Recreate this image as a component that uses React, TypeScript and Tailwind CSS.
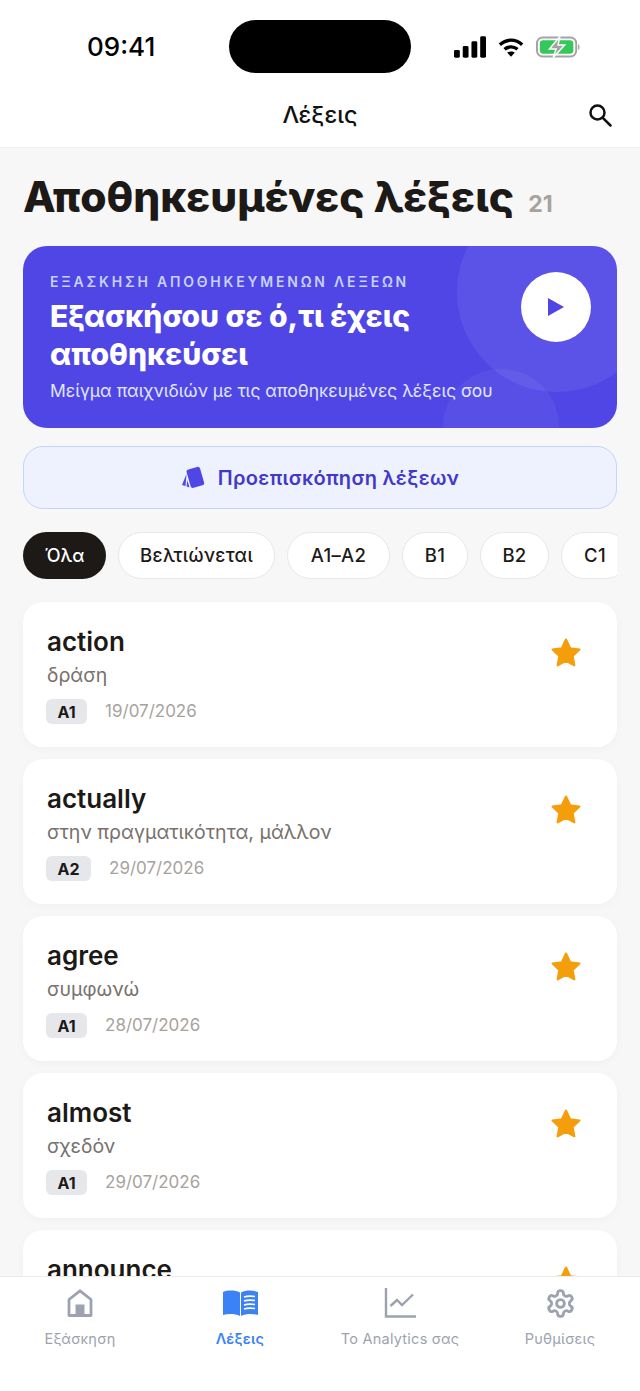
const filters = [
  { label: 'Βελτιώνεται', width: 'w-[157px]' },
  { label: 'A1–A2', width: 'w-[103px]' },
  { label: 'B1', width: 'w-[66px]' },
  { label: 'B2', width: 'w-[69px]' },
  { label: 'C1', width: 'w-[68px]' },
  { label: 'C2', width: 'w-[68px]' },
];

const words = [
  { word: 'action', meaning: 'δράση', level: 'A1', date: '19/07/2026' },
  { word: 'actually', meaning: 'στην πραγματικότητα, μάλλον', level: 'A2', date: '29/07/2026' },
  { word: 'agree', meaning: 'συμφωνώ', level: 'A1', date: '28/07/2026' },
  { word: 'almost', meaning: 'σχεδόν', level: 'A1', date: '29/07/2026' },
  { word: 'announce', meaning: 'ανακοινώνω', level: 'A2', date: '29/07/2026' },
];

function StatusIcons() {
  return (
    <div className="flex items-center gap-[12px]">
      <svg width="32" height="24" viewBox="0 0 33 24" fill="#000">
        <rect x="0" y="15" width="6" height="8" rx="1.5" />
        <rect x="9" y="11" width="6" height="12" rx="1.5" />
        <rect x="18" y="6" width="6" height="17" rx="1.5" />
        <rect x="27" y="1" width="6" height="22" rx="1.5" />
      </svg>
      <svg width="26" height="21" viewBox="0 0 28 22" fill="none" stroke="#000" strokeWidth="3.6">
        <path d="M2 8 C9 1.500 19 1.500 26 8" />
        <path d="M7 13 C11 9.500 17 9.500 21 13" />
        <path d="M14 21 L9.800 16.500 C12 14.800 16 14.800 18.200 16.500 Z" fill="#000" stroke="none" />
      </svg>
      <svg width="45" height="24" viewBox="0 0 47 24">
        <rect x="1" y="2" width="41" height="20" rx="6" fill="none" stroke="#a3a3a3" strokeWidth="2" />
        <rect x="4" y="5" width="35" height="14" rx="3.500" fill="#34c759" />
        <path d="M44 9 C46 9.500 46 14.500 44 15 Z" fill="#a3a3a3" />
        <path d="M25 1 L14 14 H21 L18 23 L30 10 H23 Z" fill="#a3a3a3" stroke="#fff" strokeWidth="1.500" />
      </svg>
    </div>
  );
}

function SearchIcon() {
  return (
    <svg width="24" height="24" viewBox="0 0 24 24" fill="none" stroke="#111" strokeWidth="2.500" strokeLinecap="round">
      <circle cx="9.500" cy="9.500" r="7" />
      <path d="M14.800 14.800 L22.500 22.500" />
    </svg>
  );
}

function Star() {
  return (
    <svg width="34" height="34" viewBox="0 0 24 24" fill="#f59e0b" stroke="#f59e0b" strokeWidth="1.500" strokeLinejoin="round">
      <path d="M12 2.500 L14.900 8.600 L21.500 9.500 L16.700 14.100 L17.900 20.700 L12 17.500 L6.100 20.700 L7.300 14.100 L2.500 9.500 L9.100 8.600 Z" />
    </svg>
  );
}

function HomeIcon() {
  return (
    <svg width="26" height="28" viewBox="0 0 26 28" fill="none">
      <path d="M2 26.500 V10.500 L13 1.800 L24 10.500 V26.500 Z" stroke="#9ca3af" strokeWidth="2.800" strokeLinejoin="round" />
      <rect x="8.500" y="15.500" width="9" height="11" fill="#9ca3af" />
    </svg>
  );
}

function BookIcon() {
  return (
    <svg width="35" height="26" viewBox="0 0 35 26" fill="#3b82f6">
      <path d="M0 2 C5 0 12 0 17 2.500 V26 C12 23.500 5 23.500 0 25 Z" />
      <path d="M35 2 C30 0 23 0 18 2.500 V26 C23 23.500 30 23.500 35 25 Z" />
      <path d="M21 7 C24 6 28 6 32 6.500 M21 11 C24 10 28 10 32 10.500 M21 15 C24 14 28 14 32 14.500 M21 19 C24 18 28 18 32 18.500" stroke="#fff" strokeWidth="1.600" fill="none" />
    </svg>
  );
}

function ChartIcon() {
  return (
    <svg width="33" height="30" viewBox="0 0 33 30" fill="none" stroke="#9ca3af" strokeWidth="2.400">
      <path d="M2 0 V28.500 H32" />
      <path d="M6.500 18 L13 12 L18 17 L29 6.500" />
    </svg>
  );
}

function GearIcon() {
  return (
    <svg width="31" height="31" viewBox="0 0 24 24" fill="none" stroke="#9ca3af" strokeWidth="2.200" strokeLinecap="round" strokeLinejoin="round">
      <path d="M12.220 2h-.44a2 2 0 0 0-2 2v.18a2 2 0 0 1-1 1.730l-.43.25a2 2 0 0 1-2 0l-.15-.08a2 2 0 0 0-2.730.73l-.22.38a2 2 0 0 0 .73 2.730l.15.1a2 2 0 0 1 1 1.720v.51a2 2 0 0 1-1 1.740l-.15.09a2 2 0 0 0-.73 2.730l.22.38a2 2 0 0 0 2.730.73l.15-.08a2 2 0 0 1 2 0l.43.25a2 2 0 0 1 1 1.730V20a2 2 0 0 0 2 2h.44a2 2 0 0 0 2-2v-.18a2 2 0 0 1 1-1.730l.43-.25a2 2 0 0 1 2 0l.15.08a2 2 0 0 0 2.730-.73l.22-.39a2 2 0 0 0-.73-2.730l-.15-.08a2 2 0 0 1-1-1.740v-.5a2 2 0 0 1 1-1.740l.15-.09a2 2 0 0 0 .73-2.730l-.22-.38a2 2 0 0 0-2.730-.73l-.15.08a2 2 0 0 1-2 0l-.43-.25a2 2 0 0 1-1-1.730V4a2 2 0 0 0-2-2z" />
      <circle cx="12" cy="12" r="3" />
    </svg>
  );
}

function PreviewIcon() {
  return (
    <svg width="24" height="24" viewBox="0 0 24 24" fill="#4f46e5">
      <rect x="7.500" y="2" width="14" height="19" rx="2.500" transform="rotate(-16 14 12)" />
      <path d="M5.500 8 L1 19 L4.500 20 Z" />
      <path d="M6.300 14 L8.500 21.500 L5.600 20.500 Z" />
    </svg>
  );
}

function NavItem({ label, active, children }: { label: string; active?: boolean; children: React.ReactNode }) {
  return (
    <div className="flex flex-col items-center">
      <div className="flex h-[32px] items-center justify-center">{children}</div>
      <span className={`mt-[10px] text-[14.5px] leading-[20px] tracking-[0.25px] ${active ? 'font-semibold text-[#3b82f6]' : 'font-normal text-[#9ca3af]'}`}>
        {label}
      </span>
    </div>
  );
}

export default function App() {
  return (
    <div className="flex h-[1391px] w-[640px] flex-col overflow-hidden bg-[#f7f7f7] font-['Inter','Noto_Sans',sans-serif] text-[#1c1917]">
      {/* Status bar and header */}
      <div className="h-[148px] shrink-0 border-b border-[#f0f0f0] bg-white">
        <div className="flex items-start pl-[87px] pt-[20px]">
          <span className="mt-[9px] w-[82px] text-[26px] font-medium leading-[36px] text-black">09:41</span>
          <div className="ml-[60px] h-[53px] w-[182px] rounded-full bg-black" />
          <div className="ml-[43px] mt-[15px]"><StatusIcons /></div>
        </div>
        <div className="mt-[25px] flex items-center pl-[52px] pr-[28px]">
          <span className="flex-1 text-center text-[23.5px] font-medium leading-[34px] text-[#111]">Λέξεις</span>
          <SearchIcon />
        </div>
      </div>

      <main className="min-h-0 flex-1 overflow-hidden px-[23px] pt-[24px]">
        <div className="flex items-baseline gap-[14px]">
          <h1 className="text-[42.5px] font-extrabold leading-[50px]">Αποθηκευμένες λέξεις</h1>
          <span className="text-[23px] font-bold text-[#a8a29e]">21</span>
        </div>

        {/* Practice banner */}
        <section className="relative mt-[24px] h-[182px] overflow-hidden rounded-[24px] bg-[#4f46e5] pl-[27px] pt-[27px]">
          <div className="absolute right-[-40px] top-[-54px] h-[200px] w-[200px] rounded-full bg-white/[0.07]" />
          <div className="absolute left-[420px] top-[123px] h-[116px] w-[116px] rounded-full bg-white/[0.05]" />
          <div className="relative">
            <p className="text-[14px] font-semibold leading-[18px] tracking-[2.8px] text-[#c7d2fe]">ΕΞΑΣΚΗΣΗ ΑΠΟΘΗΚΕΥΜΕΝΩΝ ΛΕΞΕΩΝ</p>
            <h2 className="mt-[6px] w-[420px] text-[30px] font-extrabold leading-[38px] text-white">Εξασκήσου σε ό,τι έχεις αποθηκεύσει</h2>
            <p className="mt-[6px] text-[17.5px] leading-[24px] text-[#e0e7ff]">Μείγμα παιχνιδιών με τις αποθηκευμένες λέξεις σου</p>
          </div>
          <div className="absolute left-[498px] top-[26px] flex h-[70px] w-[70px] items-center justify-center rounded-full bg-white">
            <svg width="18" height="20" viewBox="0 0 18 20" fill="#4f46e5"><path d="M1 1 L17 10 L1 19 Z" /></svg>
          </div>
        </section>

        <button className="mt-[18px] flex h-[63px] w-full items-center justify-center gap-[13px] rounded-[20px] border-[1.5px] border-[#c7d2fe] bg-[#eef2ff]">
          <PreviewIcon />
          <span className="text-[20px] font-semibold tracking-[0.3px] text-[#4338ca]">Προεπισκόπηση λέξεων</span>
        </button>

        {/* Filter chips */}
        <div className="mt-[23px] flex gap-[12px] overflow-hidden">
          <span className="flex h-[47px] w-[83px] shrink-0 items-center justify-center rounded-full bg-[#1c1917] text-[18px] font-medium text-white">Όλα</span>
          {filters.map(f => (
            <span key={f.label} className={`flex h-[47px] shrink-0 items-center justify-center rounded-full border-[1.5px] border-[#e7e7e7] bg-white text-[18.5px] font-medium tracking-[0.35px] text-[#1c1917] ${f.width}`}>
              {f.label}
            </span>
          ))}
        </div>

        {/* Saved words */}
        <div className="mt-[23px] flex flex-col gap-[12px]">
          {words.map(w => (
            <div key={w.word} className="flex h-[145px] shrink-0 justify-between rounded-[20px] bg-white pl-[23px] pr-[34px] pt-[23px] shadow-[0_2px_10px_rgba(0,0,0,0.03)]">
              <div>
                <div className="pl-px text-[26px] font-semibold leading-[34px] text-[#1c1917]">{w.word}</div>
                <div className="mt-[3px] pl-px text-[19.5px] leading-[26px] text-[#78716c]">{w.meaning}</div>
                <div className="mt-[11px] flex items-center gap-[18px]">
                  <span className="flex h-[25px] items-center rounded-[6px] bg-[#e5e7eb] px-[11.5px] text-[16px] font-bold text-[#1c1917]">{w.level}</span>
                  <span className="text-[17px] text-[#a8a29e]">{w.date}</span>
                </div>
              </div>
              <div className="pt-[11px]"><Star /></div>
            </div>
          ))}
        </div>
      </main>

      {/* Bottom tabs */}
      <nav className="grid h-[115px] shrink-0 grid-cols-4 border-t border-[#ececec] bg-white pt-[10px]">
        <NavItem label="Εξάσκηση"><HomeIcon /></NavItem>
        <NavItem label="Λέξεις" active><BookIcon /></NavItem>
        <NavItem label="Το Analytics σας"><ChartIcon /></NavItem>
        <NavItem label="Ρυθμίσεις"><GearIcon /></NavItem>
      </nav>
    </div>
  );
}
